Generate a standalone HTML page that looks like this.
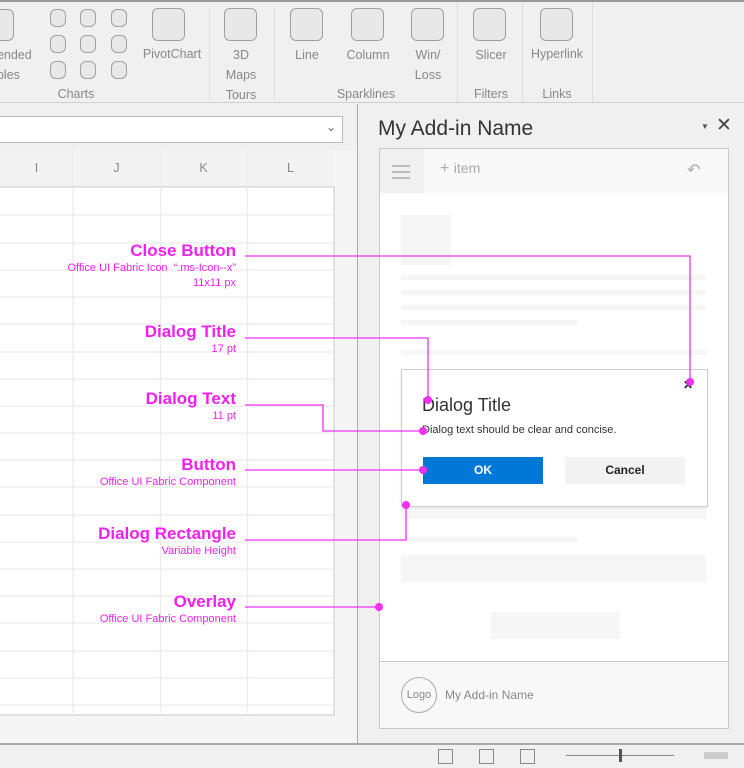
<!DOCTYPE html>
<html><head><meta charset="utf-8"><style>
*{margin:0;padding:0;box-sizing:border-box}
body{width:744px;height:768px;overflow:hidden;background:#f0f0f0;position:relative;font-family:"Liberation Sans",sans-serif}
.a{position:absolute}
.ic{position:absolute;border:1.5px solid #a0a0a0;background:#e8e8e8;border-radius:6px}
.lb{position:absolute;font-size:12.5px;color:#888;text-align:center;line-height:20px}
.m{position:absolute;color:#f020f0;text-align:right;right:508px;white-space:nowrap}
.mt{font-weight:bold;font-size:17px}
.ms{font-size:11px;line-height:15px}
.ph{position:absolute;background:#f6f6f6}
</style></head><body>
<!-- ribbon -->
<div class="a" style="left:0;top:0;width:744px;height:2px;background:#999"></div>
<div class="a" style="left:0;top:102px;width:744px;height:1px;background:#d0d0d0"></div>
<div class="ic" style="left:-16px;top:9px;width:30px;height:32px"></div>
<div class="lb" style="left:-10px;top:45px;width:52px;text-align:left">nended<br>ables</div>
<div class="ic" style="left:50px;top:9px;width:16px;height:18px"></div><div class="ic" style="left:80px;top:9px;width:16px;height:18px"></div><div class="ic" style="left:111px;top:9px;width:16px;height:18px"></div>
<div class="ic" style="left:50px;top:35px;width:16px;height:18px"></div><div class="ic" style="left:80px;top:35px;width:16px;height:18px"></div><div class="ic" style="left:111px;top:35px;width:16px;height:18px"></div>
<div class="ic" style="left:50px;top:61px;width:16px;height:18px"></div><div class="ic" style="left:80px;top:61px;width:16px;height:18px"></div><div class="ic" style="left:111px;top:61px;width:16px;height:18px"></div>
<div class="lb" style="left:40px;top:84px;width:72px">Charts</div>
<div class="ic" style="left:152px;top:8px;width:33px;height:33px"></div>
<div class="lb" style="left:136px;top:44px;width:72px">PivotChart</div>
<div class="a" style="left:209px;top:8px;width:1px;height:92px;background:#ddd"></div>
<div class="ic" style="left:224px;top:8px;width:33px;height:33px"></div>
<div class="lb" style="left:220px;top:45px;width:42px;line-height:20px">3D<br>Maps<br>Tours</div>
<div class="a" style="left:274px;top:8px;width:1px;height:92px;background:#ddd"></div>
<div class="ic" style="left:290px;top:8px;width:33px;height:33px"></div>
<div class="lb" style="left:286px;top:45px;width:42px">Line</div>
<div class="ic" style="left:351px;top:8px;width:33px;height:33px"></div>
<div class="lb" style="left:340px;top:45px;width:56px">Column</div>
<div class="ic" style="left:411px;top:8px;width:33px;height:33px"></div>
<div class="lb" style="left:407px;top:45px;width:42px">Win/<br>Loss</div>
<div class="lb" style="left:320px;top:84px;width:92px">Sparklines</div>
<div class="a" style="left:457px;top:2px;width:1px;height:100px;background:#ddd"></div>
<div class="ic" style="left:473px;top:8px;width:33px;height:33px"></div>
<div class="lb" style="left:468px;top:45px;width:46px">Slicer</div>
<div class="lb" style="left:468px;top:84px;width:46px">Filters</div>
<div class="a" style="left:522px;top:2px;width:1px;height:100px;background:#ddd"></div>
<div class="ic" style="left:540px;top:8px;width:33px;height:33px"></div>
<div class="lb" style="left:526px;top:44px;width:62px">Hyperlink</div>
<div class="lb" style="left:526px;top:84px;width:62px">Links</div>
<div class="a" style="left:592px;top:2px;width:1px;height:100px;background:#ddd"></div>
<!-- formula bar & sheet -->
<div class="a" style="left:-2px;top:116px;width:345px;height:27px;background:#fff;border:1px solid #bbb"></div>
<div class="a" style="left:326px;top:120px;font-size:12px;color:#666">⌄</div>
<div class="a" style="left:0;top:150px;width:357px;height:593px;background:#f5f5f5"></div>
<div class="a" style="left:0;top:150px;width:334px;height:37px;background:#f3f3f3"></div>
<div class="lb" style="left:0;top:158px;width:73px">I</div>
<div class="lb" style="left:73px;top:158px;width:87px">J</div>
<div class="lb" style="left:160px;top:158px;width:87px">K</div>
<div class="lb" style="left:247px;top:158px;width:87px">L</div>
<svg class="a" style="left:0;top:150px" width="357" height="570">
<rect x="-1" y="37" width="335" height="528" fill="#fff" stroke="#c8c8c8"/>
<g stroke="#ebebeb" stroke-width="1.3">
<line x1="73" y1="0" x2="73" y2="565"/><line x1="160.5" y1="0" x2="160.5" y2="565"/><line x1="247.5" y1="0" x2="247.5" y2="565"/>
<line x1="0" y1="65" x2="333" y2="65"/><line x1="0" y1="93" x2="333" y2="93"/><line x1="0" y1="120" x2="333" y2="120"/><line x1="0" y1="147" x2="333" y2="147"/><line x1="0" y1="174" x2="333" y2="174"/><line x1="0" y1="202" x2="333" y2="202"/><line x1="0" y1="229" x2="333" y2="229"/><line x1="0" y1="256" x2="333" y2="256"/><line x1="0" y1="283" x2="333" y2="283"/><line x1="0" y1="310" x2="333" y2="310"/><line x1="0" y1="337" x2="333" y2="337"/><line x1="0" y1="365" x2="333" y2="365"/><line x1="0" y1="392" x2="333" y2="392"/><line x1="0" y1="419" x2="333" y2="419"/><line x1="0" y1="446" x2="333" y2="446"/><line x1="0" y1="473" x2="333" y2="473"/><line x1="0" y1="501" x2="333" y2="501"/><line x1="0" y1="528" x2="333" y2="528"/><line x1="0" y1="555" x2="333" y2="555"/>
</g></svg>
<div class="a" style="left:357px;top:104px;width:1px;height:640px;background:#aaa"></div>
<!-- task pane -->
<div class="a" style="left:378px;top:117px;font-size:21px;color:#333;font-weight:300">My Add-in Name</div>
<div class="a" style="left:701px;top:122px;font-size:8px;color:#555">▼</div>
<div class="a" style="left:716px;top:114px;font-size:19px;color:#444">✕</div>
<div class="a" style="left:379px;top:148px;width:350px;height:581px;background:#fff;border:1px solid #c8c8c8"></div>
<div class="a" style="left:380px;top:149px;width:348px;height:44px;background:#f8f8f8"></div>
<div class="a" style="left:380px;top:149px;width:44px;height:44px;background:#f0f0f0"></div>
<div class="a" style="left:392px;top:165px;width:18px;height:2px;background:#bbb;box-shadow:0 6px 0 #bbb,0 12px 0 #bbb"></div>
<div class="a" style="left:440px;top:160px;font-size:16px;color:#aaa">+ <span style="font-size:14px">item</span></div>
<div class="a" style="left:687px;top:160px;font-size:16px;color:#aaa">↶</div>
<div class="ph" style="left:401px;top:215px;width:50px;height:50px"></div>
<div class="ph" style="left:401px;top:275px;width:305px;height:5px"></div>
<div class="ph" style="left:401px;top:290px;width:305px;height:5px"></div>
<div class="ph" style="left:401px;top:305px;width:305px;height:5px"></div>
<div class="ph" style="left:401px;top:320px;width:177px;height:5px"></div>
<div class="ph" style="left:401px;top:350px;width:305px;height:5px"></div>
<div class="ph" style="left:401px;top:508px;width:305px;height:11px"></div>
<div class="ph" style="left:401px;top:537px;width:177px;height:5px"></div>
<div class="ph" style="left:401px;top:555px;width:305px;height:27px"></div>
<div class="ph" style="left:491px;top:612px;width:129px;height:27px"></div>
<div class="a" style="left:380px;top:661px;width:348px;height:67px;background:#f8f8f8;border-top:1px solid #c8c8c8"></div>
<div class="a" style="left:401px;top:677px;width:36px;height:36px;border:1px solid #aaa;border-radius:50%;font-size:11px;color:#888;text-align:center;line-height:34px">Logo</div>
<div class="a" style="left:445px;top:688px;font-size:12px;color:#888">My Add-in Name</div>
<!-- dialog -->
<div class="a" style="left:401px;top:369px;width:307px;height:138px;background:#fff;border:1px solid #ccc;box-shadow:0 1px 2px rgba(0,0,0,.1)"></div>
<div class="a" style="left:683px;top:378px;font-size:12px;color:#222;font-weight:bold">✕</div>
<div class="a" style="left:422px;top:395px;font-size:18px;color:#333;font-weight:300">Dialog Title</div>
<div class="a" style="left:422px;top:424px;font-size:11px;color:#333">Dialog text should be clear and concise.</div>
<div class="a" style="left:423px;top:457px;width:120px;height:27px;background:#0078d7;color:#fff;font-size:12px;font-weight:bold;text-align:center;line-height:27px">OK</div>
<div class="a" style="left:565px;top:457px;width:120px;height:27px;background:#f2f2f2;color:#222;font-size:12px;font-weight:bold;text-align:center;line-height:27px">Cancel</div>
<!-- status bar -->
<div class="a" style="left:0;top:743px;width:744px;height:2px;background:#aaa"></div>
<div class="a" style="left:438px;top:749px;width:15px;height:15px;border:1px solid #888"></div>
<div class="a" style="left:479px;top:749px;width:15px;height:15px;border:1px solid #888"></div>
<div class="a" style="left:520px;top:749px;width:15px;height:15px;border:1px solid #888"></div>
<div class="a" style="left:566px;top:755px;width:108px;height:1px;background:#888"></div>
<div class="a" style="left:619px;top:749px;width:3px;height:13px;background:#555"></div>
<div class="a" style="left:704px;top:752px;width:24px;height:7px;background:#ccc"></div>
<!-- annotations -->
<svg class="a" style="left:0;top:0" width="744" height="768">
<g stroke="#f030f0" stroke-width="1.3" fill="none">
<polyline points="245,256 690,256 690,382"/>
<polyline points="245,338 428,338 428,400"/>
<polyline points="245,405 323,405 323,431 423,431"/>
<line x1="245" y1="470" x2="423" y2="470"/>
<polyline points="245,540 406,540 406,505"/>
<line x1="245" y1="607" x2="379" y2="607"/>
</g>
<g fill="#f030f0"><circle cx="690" cy="382" r="4"/><circle cx="428" cy="400" r="4"/><circle cx="423" cy="431" r="4"/><circle cx="423" cy="470" r="4"/><circle cx="406" cy="505" r="4"/><circle cx="379" cy="607" r="4"/></g>
</svg>
<div class="m" style="top:241px"><div class="mt">Close Button</div><div class="ms">Office UI Fabric Icon &nbsp;“.ms-Icon--x”<br>11x11 px</div></div>
<div class="m" style="top:322px"><div class="mt">Dialog Title</div><div class="ms">17 pt</div></div>
<div class="m" style="top:389px"><div class="mt">Dialog Text</div><div class="ms">11 pt</div></div>
<div class="m" style="top:455px"><div class="mt">Button</div><div class="ms">Office UI Fabric Component</div></div>
<div class="m" style="top:524px"><div class="mt">Dialog Rectangle</div><div class="ms">Variable Height</div></div>
<div class="m" style="top:592px"><div class="mt">Overlay</div><div class="ms">Office UI Fabric Component</div></div>
</body></html>
